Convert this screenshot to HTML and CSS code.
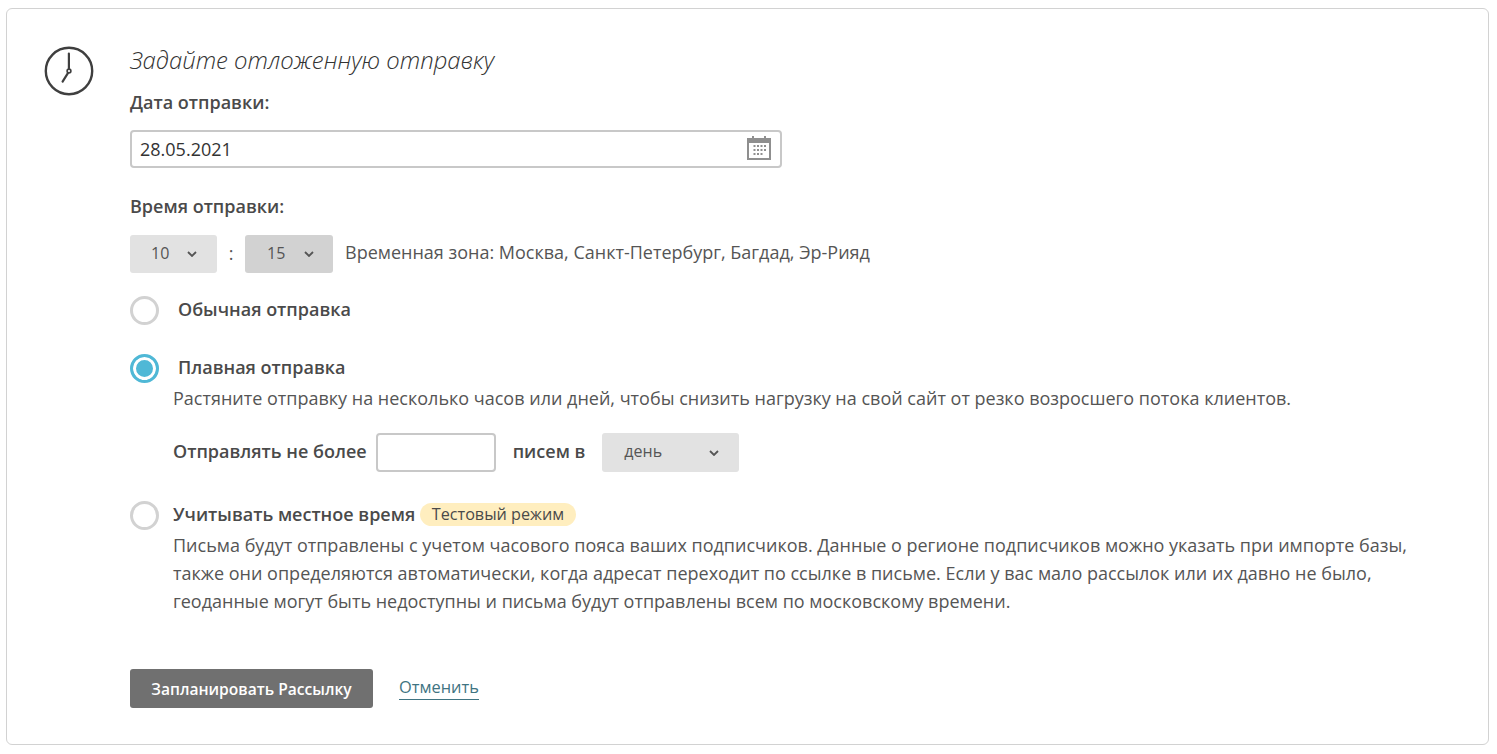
FILE: index.html
```html
<!DOCTYPE html>
<html lang="ru">
<head>
<meta charset="utf-8">
<title>Отложенная отправка</title>
<link rel="stylesheet" href="styles.css">
</head>
<body>
<main class="card">
  <div class="clock-col">
    <svg class="clock" width="50" height="50" viewBox="0 0 50 50" fill="none" stroke="#3f3f3f" stroke-linecap="round">
      <circle cx="25" cy="25" r="23.2" stroke-width="2.4"/>
      <path d="M24.9 7.5V22.5" stroke-width="2.2"/>
      <path d="M23.9 27.2L18.6 35.6" stroke-width="2.2"/>
      <circle cx="25" cy="25" r="1.9" stroke-width="1.6"/>
    </svg>
  </div>
  <div class="content">
    <h1 class="title">Задайте отложенную отправку</h1>
    <div class="label date-label">Дата отправки:</div>
    <div class="date-field">
      <span class="date-value">28.05.2021</span>
      <svg class="cal" width="26" height="26" viewBox="0 0 26 26">
        <path d="M1 3H6V1H8V3H18V1H20V3H25V25H1Z" fill="#8f8f8f"/>
        <rect x="3" y="8" width="20" height="15" fill="#fff"/>
        <g fill="#8f8f8f">
          <rect x="7.5" y="10" width="2" height="2"/><rect x="11" y="10" width="2" height="2"/><rect x="14.5" y="10" width="2" height="2"/><rect x="18" y="10" width="2" height="2"/>
          <rect x="7.5" y="14" width="2" height="2"/><rect x="11" y="14" width="2" height="2"/><rect x="14.5" y="14" width="2" height="2"/><rect x="18" y="14" width="2" height="2"/>
          <rect x="7.5" y="18" width="2" height="2"/><rect x="11" y="18" width="2" height="2"/><rect x="14.5" y="18" width="2" height="2"/>
        </g>
      </svg>
    </div>
    <div class="label time-label">Время отправки:</div>
    <div class="time-row">
      <div class="select select-hour"><span>10</span><svg class="chev" width="10" height="6" viewBox="0 0 10 6"><path d="M1 1L5 5L9 1" fill="none" stroke="#555" stroke-width="1.8"/></svg></div>
      <span class="colon">:</span>
      <div class="select select-min"><span>15</span><svg class="chev" width="10" height="6" viewBox="0 0 10 6"><path d="M1 1L5 5L9 1" fill="none" stroke="#555" stroke-width="1.8"/></svg></div>
      <span class="zone">Временная зона: Москва, Санкт-Петербург, Багдад, Эр-Рияд</span>
    </div>
    <div class="radio-row normal">
      <span class="radio"></span>
      <span class="label radio-gap">Обычная отправка</span>
    </div>
    <div class="radio-row smooth">
      <span class="radio on"></span>
      <span class="label radio-gap">Плавная отправка</span>
    </div>
    <p class="desc smooth-desc">Растяните отправку на несколько часов или дней, чтобы снизить нагрузку на свой сайт от резко возросшего потока клиентов.</p>
    <div class="limit-row">
      <span class="label">Отправлять не более</span>
      <span class="limit-input"></span>
      <span class="label">писем в</span>
      <div class="select select-day"><span>день</span><svg class="chev" width="10" height="6" viewBox="0 0 10 6"><path d="M1 1L5 5L9 1" fill="none" stroke="#555" stroke-width="1.8"/></svg></div>
    </div>
    <div class="radio-row local">
      <span class="radio"></span>
      <span class="label">Учитывать местное время</span>
      <span class="badge">Тестовый режим</span>
    </div>
    <p class="desc local-desc">Письма будут отправлены с учетом часового пояса ваших подписчиков. Данные о регионе подписчиков можно указать при импорте базы,<br>также они определяются автоматически, когда адресат переходит по ссылке в письме. Если у вас мало рассылок или их давно не было,<br>геоданные могут быть недоступны и письма будут отправлены всем по московскому времени.</p>
    <div class="actions">
      <button class="submit" type="button">Запланировать Рассылку</button>
      <a class="cancel" href="#">Отменить</a>
    </div>
  </div>
</main>
</body>
</html>
```

FILE: styles.css
```css
* { box-sizing: border-box; }
html, body { height: 100%; }
body {
  margin: 0;
  padding: 8px 8px 9px 6px;
  background: #fff;
  color: #555;
  font-family: "Open Sans", "Noto Sans", sans-serif;
  font-size: 18px;
  line-height: 24px;
}
.card {
  display: flex;
  height: 737px;
  border: 1px solid #d2d2d2;
  border-radius: 6px;
  padding: 36px 0 0 37px;
}
.clock-col { width: 86px; flex: none; }
.clock { display: block; margin: 0.5px 0 0 -0.5px; }
.content { flex: 1; min-width: 0; }
.title {
  margin: 0;
  font-size: 23.9px;
  line-height: 30px;
  font-weight: 300;
  font-style: italic;
  color: #333;
}
.label { font-weight: 600; color: #4a4a4a; font-size: 18px; }
.date-label { margin-top: 15px; }
.date-field {
  display: flex;
  align-items: center;
  justify-content: space-between;
  width: 652px;
  height: 38px;
  margin-top: 16px;
  padding: 0 8px;
  border: 2px solid #c8c8c8;
  border-radius: 4px;
  color: #333;
  font-size: 18px;
}
.cal { margin-top: -2px; }
.time-label { margin-top: 26px; }
.time-row { display: flex; align-items: center; margin-top: 17px; }
.select {
  display: flex;
  align-items: center;
  justify-content: space-between;
  height: 38px;
  border-radius: 3px;
  background: #e2e2e2;
  font-size: 16px;
}
.select span { margin-bottom: 2px; }
.select-hour { width: 87px; padding: 0 20px 0 21px; }
.select-min { width: 88px; padding: 0 19px 0 22px; background: #d2d2d2; }
.select-day { width: 137px; height: 39px; padding: 0 20px 0 22px; margin-left: 17px; }
.select-day span { margin-bottom: 4px; }
.colon { width: 28px; text-align: center; margin-bottom: 2px; }
.zone { margin: 0 0 4px 12px; }
.radio-row { display: flex; align-items: center; }
.radio-row .label { margin-bottom: 4px; }
.radio {
  flex: none;
  width: 29px;
  height: 29px;
  border: 3px solid #d2d2d2;
  border-radius: 50%;
}
.radio.on {
  border-color: #4fb8d6;
  background: #4fb8d6;
  box-shadow: inset 0 0 0 3px #fff;
}
.radio-gap { margin-left: 19px; }
.normal { margin-top: 23px; }
.smooth { margin-top: 29px; }
.desc { margin: 0 0 0 43px; }
.smooth-desc { margin-top: 3px; }
.limit-row { display: flex; align-items: center; margin: 23px 0 0 43px; }
.limit-row .label { margin-bottom: 4px; }
.limit-input {
  width: 120px;
  height: 39px;
  margin: 0 17px 0 9px;
  border: 2px solid #c8c8c8;
  border-radius: 4px;
}
.local { margin-top: 29px; }
.local .label { margin-left: 14px; }
.badge {
  margin: 0 0 2px 5px;
  padding: 0 11.5px;
  height: 23px;
  line-height: 23px;
  border-radius: 12px;
  background: #ffeebf;
  color: #4a4a4a;
  font-size: 16.2px;
  font-weight: 400;
}
.local-desc { margin-top: 1px; line-height: 28px; }
.actions { display: flex; align-items: flex-start; margin-top: 54px; }
.submit {
  width: 243px;
  height: 39px;
  border: 0;
  border-radius: 3px;
  background: #707070;
  color: #fff;
  font: 600 15.6px/39px "Open Sans", sans-serif;
}
.cancel {
  margin: 6px 0 0 26px;
  line-height: 24px;
  color: #3f7482;
  font-size: 16.4px;
  text-decoration: none;
  border-bottom: 1px solid #3f7482;
}
```
